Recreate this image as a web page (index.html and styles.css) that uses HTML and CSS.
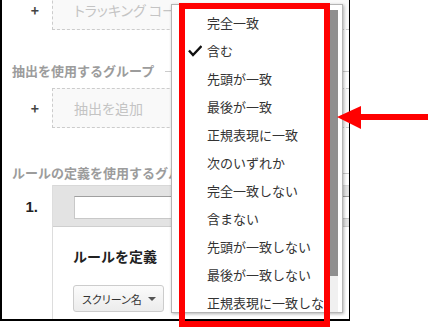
FILE: index.html
```html
<!DOCTYPE html>
<html lang="ja">
<head>
    <meta charset="UTF-8">
    <title>ルールの定義</title>
    <link rel="stylesheet" href="styles.css">
</head>
<body>
    <div class="shot">
        <div class="add-row first">
            <span class="plus">+</span>
            <div class="drop-box">トラッキング コード</div>
        </div>

        <h3 class="group-title">抽出を使用するグループ</h3>
        <div class="add-row">
            <span class="plus">+</span>
            <div class="drop-box">抽出を追加</div>
        </div>

        <h3 class="group-title second">ルールの定義を使用するグループ</h3>
        <div class="rule-row">
            <div class="num">1.</div>
            <div class="rule-card">
                <div class="rule-head">
                    <input class="rule-input" type="text">
                </div>
                <div class="rule-body">
                    <div class="rule-title">ルールを定義</div>
                    <div class="select-btn">
                        <span>スクリーン名</span>
                        <span class="caret"></span>
                    </div>
                </div>
            </div>
        </div>

        <!-- 条件のドロップダウン -->
        <div class="menu">
            <ul class="menu-list">
                <li><span class="mark"></span>完全一致</li>
                <li><span class="mark"><svg width="14" height="12" viewBox="0 0 14 12"><path d="M1 5.5 L5 10 L13.5 1" fill="none" stroke="#111" stroke-width="2.4"/></svg></span>含む</li>
                <li><span class="mark"></span>先頭が一致</li>
                <li><span class="mark"></span>最後が一致</li>
                <li><span class="mark"></span>正規表現に一致</li>
                <li><span class="mark"></span>次のいずれか</li>
                <li><span class="mark"></span>完全一致しない</li>
                <li><span class="mark"></span>含まない</li>
                <li><span class="mark"></span>先頭が一致しない</li>
                <li><span class="mark"></span>最後が一致しない</li>
                <li><span class="mark"></span>正規表現に一致しない</li>
            </ul>
            <div class="menu-scroll">
                <div class="track"><div class="thumb"></div></div>
            </div>
        </div>
    </div>

    <!-- 注釈 -->
    <div class="highlight"></div>
    <svg class="arrow" width="92" height="28" viewBox="0 0 92 28">
        <polygon points="1,13 25,2 25,25" fill="#f00"/>
        <rect x="24" y="10" width="68" height="6" fill="#f00"/>
    </svg>
</body>
</html>
```

FILE: styles.css
```css
body {
    margin: 0;
    background: #fff;
    font-family: "Noto Sans CJK JP", "Liberation Sans", sans-serif;
    color: #333;
    position: relative;
    width: 428px;
    height: 327px;
    overflow: hidden;
}
.shot {
    position: relative;
    width: 347px;
    height: 319px;
    border-left: 2px solid #000;
    border-right: 1px solid #000;
    border-bottom: 2px solid #000;
    overflow: hidden;
    background: #fff;
}
.add-row {
    display: flex;
    align-items: center;
    height: 40px;
    margin-top: 7px;
    margin-right: -10px;
}
.add-row.first {
    margin-top: -10px;
}
.plus {
    width: 50px;
    box-sizing: border-box;
    padding-right: 13px;
    text-align: right;
    font-size: 14px;
    font-weight: bold;
    color: #444;
    line-height: 20px;
}
.drop-box {
    flex: 1;
    height: 40px;
    box-sizing: border-box;
    border: 1px dashed #ccc;
    background: #f9f9f9;
    padding-left: 21px;
    font-size: 14px;
    line-height: 38px;
    color: #c4c4c4;
    white-space: nowrap;
    font-feature-settings: "palt";
}
.group-title {
    display: flex;
    align-items: center;
    margin: 31px 0 0 10px;
    font-size: 13px;
    line-height: 20px;
    font-weight: bold;
    color: #9c9c9c;
    white-space: nowrap;
}
.group-title::after {
    content: "";
    flex: 1;
    border-top: 1px solid #ccc;
    margin-left: 11px;
}
.group-title.second {
    margin-top: 35px;
}
.rule-row {
    display: flex;
    margin-top: 2px;
    margin-right: -10px;
}
.num {
    width: 50px;
    box-sizing: border-box;
    padding: 12px 14px 0 0;
    text-align: right;
    font-family: "Liberation Sans", sans-serif;
    font-size: 15px;
    font-weight: bold;
    line-height: 20px;
    color: #222;
}
.rule-card {
    flex: 1;
    border-left: 1px solid #ddd;
    height: 200px;
}
.rule-head {
    background: #e3e3e3;
    border-top: 1px solid #d8d8d8;
    border-bottom: 1px solid #cfcfcf;
    padding: 10px 0 7px 21px;
}
.rule-input {
    display: block;
    width: 100%;
    height: 23px;
    box-sizing: border-box;
    margin: 0;
    border: 1px solid #c8c8c8;
    border-top-color: #9f9f9f;
    background: #fff;
}
.rule-body {
    padding: 19px 0 0 20px;
}
.rule-title {
    font-size: 14px;
    line-height: 20px;
    font-weight: bold;
    color: #222;
}
.select-btn {
    display: flex;
    align-items: center;
    margin-top: 19px;
    width: 91px;
    height: 27px;
    box-sizing: border-box;
    padding: 0 7px 0 8px;
    border: 1px solid #ccc;
    border-radius: 3px;
    background: linear-gradient(#fbfbfb, #ececec);
    font-size: 11px;
    color: #333;
    white-space: nowrap;
    font-feature-settings: "palt";
}
.caret {
    margin-left: auto;
    width: 0;
    height: 0;
    border-top: 4px solid #555;
    border-left: 4px solid transparent;
    border-right: 4px solid transparent;
}
.menu {
    position: absolute;
    left: 169px;
    top: 4px;
    width: 170px;
    height: 307px;
    display: flex;
    border: 1px solid #b4b4b4;
    background: #fff;
    box-shadow: 1px 1px 3px rgba(0, 0, 0, 0.3);
    overflow: hidden;
}
.menu-list {
    flex: 1;
    list-style: none;
    margin: 0;
    padding: 4px 0 0 0;
    overflow: hidden;
}
.menu-list li {
    display: flex;
    align-items: center;
    height: 28px;
    font-size: 13px;
    line-height: 28px;
    color: #333;
    white-space: nowrap;
}
.mark {
    width: 35px;
    flex: none;
    box-sizing: border-box;
    padding-right: 5px;
    display: flex;
    justify-content: flex-end;
}
.menu-scroll {
    width: 16px;
    box-sizing: border-box;
    padding: 5px 4px 0 2px;
    display: flex;
}
.track {
    flex: 1;
    background: #f0f0f0;
}
.thumb {
    height: 266px;
    background: #8f8f8f;
}
.highlight {
    position: absolute;
    left: 179px;
    top: 3px;
    width: 151px;
    height: 324px;
    box-sizing: border-box;
    border: 6px solid #f00;
    pointer-events: none;
}
.arrow {
    position: absolute;
    left: 336px;
    top: 104px;
}
```
